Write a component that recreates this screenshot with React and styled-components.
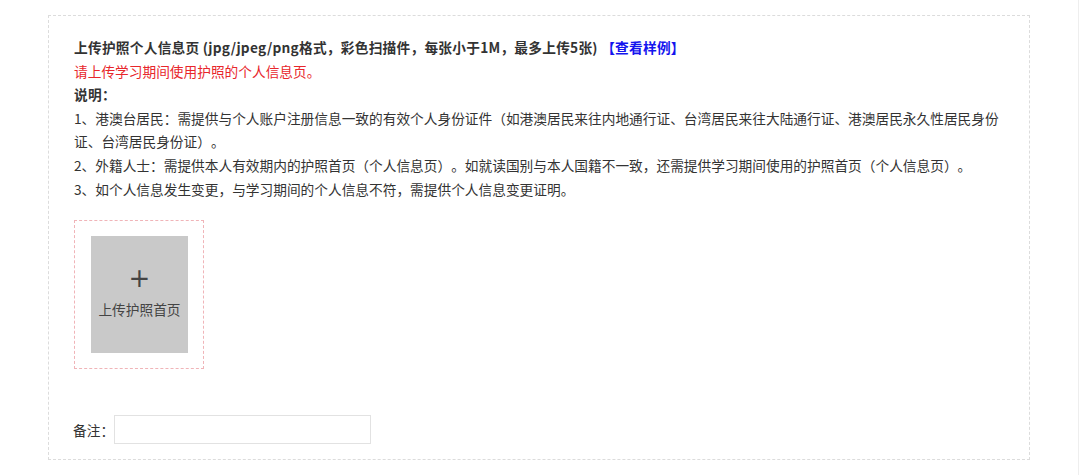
import React from "react";
import styled, { createGlobalStyle } from "styled-components";

const GlobalStyle = createGlobalStyle`
    html, body {
        margin: 0;
        padding: 0;
        background: #ffffff;
    }
    body {
        font-family: "Microsoft YaHei", "Noto Sans CJK SC", "Noto Sans", sans-serif;
        color: #333333;
        text-spacing-trim: space-all;
    }
`;

const Page = styled.div`
    width: 1079px;
    height: 475px;
    box-sizing: border-box;
    padding: 15px 0 0 48px;
    border-right: 1px solid #eeeeee;
`;

const Panel = styled.div`
    width: 982px;
    box-sizing: border-box;
    border: 1px dashed #dcdcdc;
    padding: 20px 26px 15px 25px;
`;

const Line = styled.div`
    font-size: 13.7px;
    line-height: 23.6px;
    color: ${(p) => (p.$red ? "#e8262b" : "#333333")};
    font-weight: ${(p) => (p.$bold ? 700 : 400)};
    letter-spacing: ${(p) => (p.$bold ? "0.25px" : "0")};
`;

const Link = styled.a`
    color: #1414ee;
    font-weight: 700;
    text-decoration: none;
    cursor: pointer;
`;

const UploadFrame = styled.div`
    width: 130px;
    height: 149px;
    box-sizing: border-box;
    margin-top: 19px;
    border: 1px dashed #f0b4b8;
    padding: 15px 15px 15px 16px;
`;

const UploadTile = styled.div`
    width: 97px;
    height: 117px;
    box-sizing: border-box;
    padding-top: 29px;
    background: #c9c9c9;
    color: #444444;
    display: flex;
    flex-direction: column;
    align-items: center;
    gap: 9px;
    cursor: pointer;
`;

const Plus = styled.div`
    font-family: "DejaVu Sans", sans-serif;
    font-size: 26px;
    line-height: 26px;
    font-weight: 400;
`;

const TileText = styled.div`
    font-size: 13.7px;
    line-height: 18px;
`;

const RemarkRow = styled.div`
    display: flex;
    align-items: center;
    margin-top: 46px;
    margin-left: -1px;
`;

const Label = styled.label`
    font-size: 13.7px;
    color: #333333;
`;

const Input = styled.input`
    width: 257px;
    height: 29px;
    box-sizing: border-box;
    margin: 0;
    border: 1px solid #e2e2e2;
    outline: none;
    padding: 0 6px;
    font-size: 13px;
`;

const App = () => {
    return (
        <>
            <GlobalStyle />
            <Page>
                <Panel>
                    <Line $bold>
                        上传护照个人信息页 (jpg/jpeg/png格式，彩色扫描件，每张小于1M，最多上传5张) <Link>【查看样例】</Link>
                    </Line>
                    <Line $red>请上传学习期间使用护照的个人信息页。</Line>
                    <Line $bold>说明：</Line>
                    <Line>
                        1、港澳台居民：需提供与个人账户注册信息一致的有效个人身份证件（如港澳居民来往内地通行证、台湾居民来往大陆通行证、港澳居民永久性居民身份证、台湾居民身份证）。
                    </Line>
                    <Line>2、外籍人士：需提供本人有效期内的护照首页（个人信息页）。如就读国别与本人国籍不一致，还需提供学习期间使用的护照首页（个人信息页）。</Line>
                    <Line>3、如个人信息发生变更，与学习期间的个人信息不符，需提供个人信息变更证明。</Line>

                    <UploadFrame>
                        <UploadTile>
                            <Plus>+</Plus>
                            <TileText>上传护照首页</TileText>
                        </UploadTile>
                    </UploadFrame>

                    <RemarkRow>
                        <Label>备注：</Label>
                        <Input type="text" />
                    </RemarkRow>
                </Panel>
            </Page>
        </>
    );
};

export default App;
